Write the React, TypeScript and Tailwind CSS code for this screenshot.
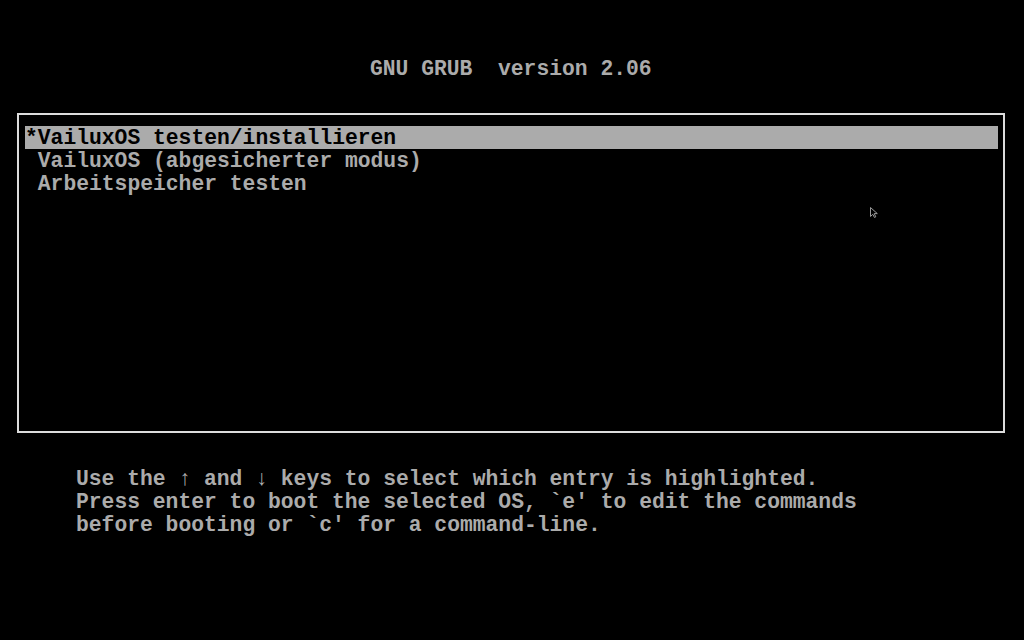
import React from "react";

const font = { fontFamily: '"Liberation Mono", "DejaVu Sans Mono", monospace' };

export default function App() {
  return (
    <div
      className="relative w-[1024px] h-[640px] bg-black text-[#ababab] font-bold text-[21.33px] leading-[23px] overflow-hidden"
      style={font}
    >
      <div className="pt-[58px] pl-[370px] whitespace-pre">GNU GRUB  version 2.06</div>
      <div className="ml-[17px] mt-[32px] w-[988px] h-[320px] border-2 border-[#dcdcdc] pt-[11px] pl-[6px] pr-[5px]">
        <div className="bg-[#ababab] text-black h-[23px] pt-[1px] leading-[22px] whitespace-pre">*VailuxOS testen/installieren</div>
        <div className="h-[23px] pt-[1px] leading-[22px] whitespace-pre"> VailuxOS (abgesicherter modus)</div>
        <div className="h-[23px] pt-[1px] leading-[22px] whitespace-pre"> Arbeitspeicher testen</div>
      </div>
      <div className="mt-[35px] pl-[76px] whitespace-pre">
        <div>Use the ↑ and ↓ keys to select which entry is highlighted.</div>
        <div>Press enter to boot the selected OS, `e' to edit the commands</div>
        <div>before booting or `c' for a command-line.</div>
      </div>
      <svg className="absolute left-[869px] top-[206px]" width="10" height="13" viewBox="0 0 10 13">
        <path d="M1.5 1.5 L1.5 10.5 L3.8 8.3 L5.5 11.5 L6.8 10.8 L5.2 7.6 L8.3 7.6 Z" fill="black" stroke="#9a9a9a" strokeWidth="1" />
      </svg>
    </div>
  );
}
